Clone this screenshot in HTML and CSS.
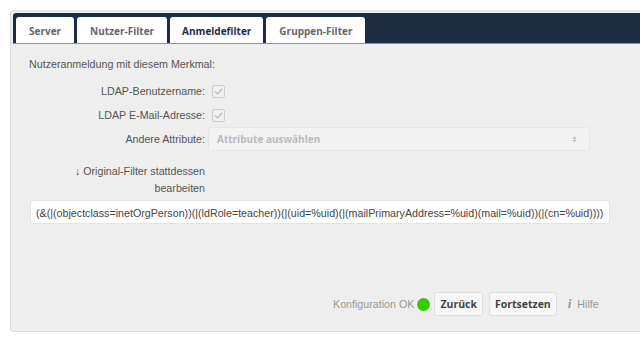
FILE: index.html
```html
<!DOCTYPE html>
<html lang="de">
<head>
    <meta charset="UTF-8">
    <title>LDAP Anmeldefilter</title>
    <link rel="stylesheet" href="styles.css">
</head>
<body>

<div id="ldap">
    <ul class="tabs">
        <li class="tab">Server</li>
        <li class="tab">Nutzer-Filter</li>
        <li class="tab active">Anmeldefilter</li>
        <li class="tab">Gruppen-Filter</li>
    </ul>

    <div class="content">
        <p class="intro">Nutzeranmeldung mit diesem Merkmal:</p>

        <div class="row">
            <label class="lbl">LDAP-Benutzername:</label>
            <span class="check">
                <svg width="9" height="7" viewBox="0 0 9 7"><path d="M1 3.5 L3.5 6 L8 1" fill="none" stroke="#bbb" stroke-width="1.2"/></svg>
            </span>
        </div>
        <div class="row">
            <label class="lbl">LDAP E-Mail-Adresse:</label>
            <span class="check">
                <svg width="9" height="7" viewBox="0 0 9 7"><path d="M1 3.5 L3.5 6 L8 1" fill="none" stroke="#bbb" stroke-width="1.2"/></svg>
            </span>
        </div>
        <div class="row">
            <label class="lbl">Andere Attribute:</label>
            <div class="select">
                <span>Attribute auswählen</span>
                <svg width="5" height="7" viewBox="0 0 5 7"><path d="M0.5 3 L2.5 0.5 L4.5 3 Z M0.5 4 L2.5 6.5 L4.5 4 Z" fill="#bbb"/></svg>
            </div>
        </div>

        <div class="row toggle">
            <span class="lbl">↓ Original-Filter stattdessen<br>bearbeiten</span>
        </div>

        <div class="filter">(&amp;(|(objectclass=inetOrgPerson))(|(ldRole=teacher))(|(uid=%uid)(|(mailPrimaryAddress=%uid)(mail=%uid))(|(cn=%uid))))</div>

        <div class="footer">
            <span class="status">Konfiguration OK</span>
            <span class="dot"></span>
            <button class="btn">Zurück</button>
            <button class="btn">Fortsetzen</button>
            <span class="help"><i>i</i> Hilfe</span>
        </div>
    </div>
</div>

</body>
</html>
```

FILE: styles.css
```css
body {
    margin: 0;
    padding: 10px 0 0 10px;
    background: #fff;
    font-family: "Liberation Sans", Arial, sans-serif;
    font-size: 10.7px;
    color: #555;
}
#ldap {
    width: 640px;
    height: 322px;
    box-sizing: border-box;
    background: #eee;
    border: 1px solid #ddd;
    border-right: none;
    border-radius: 4px 0 0 4px;
    overflow: hidden;
}
.tabs {
    display: flex;
    gap: 3px;
    margin: 2px 0 0 2px;
    padding: 4px 0 0 3px;
    height: 26px;
    list-style: none;
    background: #1f2d44;
    border-radius: 3px 0 0 0;
    border-bottom: 1px solid #8a93a3;
}
.tab {
    padding: 2px 13px 0;
    height: 24px;
    line-height: 24px;
    background: #fff;
    border-radius: 3px 3px 0 0;
    font-family: "Open Sans", sans-serif;
    font-weight: bold;
    font-size: 10px;
    color: #666;
}
.tab.active {
    color: #1f2d44;
    padding: 2px 12px 0;
}
.content {
    padding: 14px 0 0 18px;
}
.intro {
    margin: 0 0 9px;
}
.row {
    display: flex;
    align-items: center;
    min-height: 24px;
}
.lbl {
    width: 176px;
    text-align: right;
    margin-right: 7px;
}
.check {
    display: flex;
    align-items: center;
    justify-content: center;
    width: 11px;
    height: 11px;
    border: 1px solid #ccc;
    border-radius: 2px;
    background: #f0f0f0;
}
.select {
    display: flex;
    align-items: center;
    justify-content: space-between;
    width: 382px;
    height: 24px;
    box-sizing: border-box;
    padding: 0 12px 0 8px;
    margin-left: -4px;
    background: #f2f2f2;
    border: 1px solid #e6e6e6;
    border-radius: 3px;
    font-family: "Open Sans", sans-serif;
    font-weight: bold;
    font-size: 10px;
    color: #bbb;
}
.toggle {
    margin-top: 12px;
}
.toggle .lbl {
    line-height: 17px;
}
.filter {
    width: 580px;
    height: 24px;
    box-sizing: border-box;
    margin: 3px 0 0 1px;
    padding: 0 5px;
    line-height: 24px;
    background: #fff;
    border: 1px solid #e4e4e4;
    border-radius: 3px;
    color: #444;
    white-space: nowrap;
}
.footer {
    display: flex;
    align-items: center;
    gap: 3px;
    margin: 68px 0 0 304px;
}
.status {
    color: #999;
}
.dot {
    width: 13px;
    height: 13px;
    border-radius: 50%;
    background: #33cc00;
}
.btn {
    height: 24px;
    padding: 0 5px;
    margin-left: 1px;
    background: #f6f6f6;
    border: 1px solid #ddd;
    border-radius: 3px;
    font-family: "Open Sans", sans-serif;
    font-weight: bold;
    font-size: 10.5px;
    color: #444;
}
.btn + .btn {
    margin-left: 3px;
}
.help {
    margin-left: 8px;
    color: #999;
}
.help i {
    font-family: "Liberation Serif", serif;
    font-weight: bold;
    font-size: 13px;
    margin-right: 3px;
}
```
